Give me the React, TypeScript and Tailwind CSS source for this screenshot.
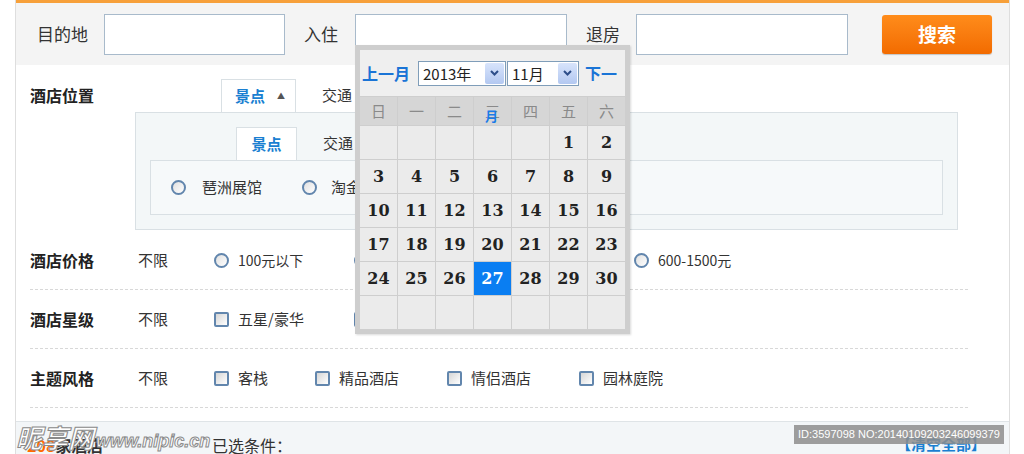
import React from 'react';

const Radio = () => (
  <span className="inline-block w-[15px] h-[15px] rounded-full border-2 border-[#6286ad] bg-linear-to-br from-[#e0e0e0] to-white shrink-0" />
);

const Check = () => (
  <span className="inline-block w-[15px] h-[15px] rounded-[2px] border-2 border-[#6286ad] bg-linear-to-br from-[#d6d6d6] to-white shrink-0" />
);

const weekDays = ['日', '一', '二', '三', '四', '五', '六'];
const dates: (number | null)[] = [
  null, null, null, null, null, 1, 2,
  3, 4, 5, 6, 7, 8, 9,
  10, 11, 12, 13, 14, 15, 16,
  17, 18, 19, 20, 21, 22, 23,
  24, 25, 26, 27, 28, 29, 30,
  null, null, null, null, null, null, null,
];

const SelectBox = ({ text, wide }: { text: string; wide?: boolean }) => (
  <div className={wide ? 'flex items-center h-[25px] w-[88px] border border-[#7f9db9] bg-white' : 'flex items-center h-[25px] w-[72px] border border-[#7f9db9] bg-white'}>
    <span className="flex-1 pl-[4px] text-[15px] text-[#222] leading-none">{text}</span>
    <span className="flex items-center justify-center w-[19px] h-[21px] mr-px bg-linear-to-b from-[#d8e4fb] to-[#b3c8f1] rounded-[2px]">
      <svg width="9" height="6" viewBox="0 0 9 6">
        <path d="M1 1 L4.5 4.5 L8 1" stroke="#2d4e8a" strokeWidth="2" fill="none" />
      </svg>
    </span>
  </div>
);

const Calendar = () => (
  <div className="absolute left-[339px] top-[45px] z-10 w-[275px] bg-[#cecece] p-[5px] shadow-[1px_1px_2px_rgba(0,0,0,0.15)]">
    {/* header */}
    <div className="flex items-center h-[46px] bg-[#efefef] overflow-hidden whitespace-nowrap">
      <span className="pl-[2px] text-[16px] font-bold text-[#1a74d6] leading-none">上一月</span>
      <span className="ml-[8px]"><SelectBox text="2013年" wide /></span>
      <span className="ml-[1px]"><SelectBox text="11月" /></span>
      <span className="ml-[6px] w-[32px] overflow-hidden text-[16px] font-bold text-[#1a74d6] leading-none">下一月</span>
    </div>
    {/* week days */}
    <div className="relative grid grid-cols-7 gap-px mt-px">
      {weekDays.map((d) => (
        <div key={d} className="h-[28px] bg-[#d6d6d6] flex items-center justify-center text-[15px] text-[#8a8a8a]">
          {d}
        </div>
      ))}
      <span className="absolute left-[125px] top-[12px] text-[13px] font-bold text-[#1a7ce8] leading-none">月</span>
    </div>
    {/* dates */}
    <div className="grid grid-cols-7 gap-px mt-px">
      {dates.map((n, i) => (
        <div
          key={i}
          className={
            n === 27
              ? 'h-[33px] bg-[#0a7ef2] flex items-center justify-center font-["DejaVu_Serif",serif] font-bold text-[16px] text-white'
              : 'h-[33px] bg-[#ebebeb] flex items-center justify-center font-["DejaVu_Serif",serif] font-bold text-[16px] text-[#222]'
          }
        >
          {n ?? ''}
        </div>
      ))}
    </div>
  </div>
);

export default function App() {
  return (
    <div className="w-[1024px] h-[454px] overflow-hidden bg-white font-['Noto_Sans_CJK_SC','Noto_Sans',sans-serif] text-[#333]">
      <div className="relative ml-[15px] w-[995px] border-x border-[#dedede]">
        <div className="h-[3px] bg-[#f7a03a]" />

        {/* search bar */}
        <div className="flex items-center h-[62px] bg-[#f4f4f4] pl-[21px]">
          <span className="w-[67px] text-[17px] text-[#333]">目的地</span>
          <div className="w-[181px] h-[41px] border border-[#a8bacb] bg-white" />
          <span className="ml-[19px] w-[51px] text-[17px] text-[#333]">入住</span>
          <div className="w-[212px] h-[41px] border border-[#a8bacb] bg-white" />
          <span className="ml-[19px] w-[50px] text-[17px] text-[#333]">退房</span>
          <div className="w-[212px] h-[41px] border border-[#a8bacb] bg-white" />
          <button className="ml-[34px] w-[110px] h-[39px] rounded-[3px] bg-linear-to-b from-[#ff8c1a] to-[#f26b00] text-white text-[19px] font-bold shadow-[0_1px_1px_rgba(0,0,0,0.2)]">
            搜索
          </button>
        </div>

        {/* filters */}
        <div className="pl-[14px] pt-[14px] w-[952px]">
          {/* 酒店位置 */}
          <div className="flex">
            <div className="w-[105px] h-[33px] leading-[33px] text-[16px] font-bold text-[#222]">酒店位置</div>
            <div className="w-[823px]">
              <div className="flex items-center h-[33px] pl-[86px]">
                <div className="flex items-center h-[33px] w-[75px] pl-[13px] bg-white border border-b-0 border-[#d9e0e4]">
                  <span className="text-[15px] font-bold text-[#1a7fd1]">景点</span>
                  <span className="ml-[12px] text-[8px] text-[#555]">▲</span>
                </div>
                <span className="ml-[26px] text-[15px] text-[#333]">交通</span>
              </div>
              <div className="h-[118px] border border-[#d9e0e4] bg-[#f3f7f8] px-[14px] pt-[14px]">
                <div className="flex items-center h-[33px] pl-[86px]">
                  <div className="flex items-center justify-center h-[33px] w-[61px] bg-white border border-b-0 border-[#d9e0e4]">
                    <span className="text-[15px] font-bold text-[#1a7fd1]">景点</span>
                  </div>
                  <span className="ml-[26px] text-[15px] text-[#333]">交通</span>
                </div>
                <div className="flex items-center h-[55px] border border-[#d9e0e4] bg-[#f6f9fa] pl-[20px]">
                  <Radio />
                  <span className="ml-[16px] text-[15px]">琶洲展馆</span>
                  <span className="ml-[40px]"><Radio /></span>
                  <span className="ml-[14px] text-[15px]">淘金路</span>
                </div>
              </div>
            </div>
          </div>

          {/* 酒店价格 */}
          <div className="flex items-center h-[59px] mt-px border-b border-dashed border-[#d8d8d8]">
            <span className="w-[108px] text-[16px] font-bold text-[#222]">酒店价格</span>
            <span className="w-[76px] text-[15px]">不限</span>
            {['100元以下', '100-300元', '300-600元', '600-1500元'].map((t) => (
              <span key={t} className="flex items-center w-[140px]">
                <Radio />
                <span className="ml-[9px] text-[14px]">{t}</span>
              </span>
            ))}
          </div>

          {/* 酒店星级 */}
          <div className="flex items-center h-[59px] border-b border-dashed border-[#d8d8d8]">
            <span className="w-[108px] text-[16px] font-bold text-[#222]">酒店星级</span>
            <span className="w-[76px] text-[15px]">不限</span>
            {['五星/豪华', '四星/高档', '三星/舒适'].map((t) => (
              <span key={t} className="flex items-center w-[140px]">
                <Check />
                <span className="ml-[9px] text-[15px]">{t}</span>
              </span>
            ))}
          </div>

          {/* 主题风格 */}
          <div className="flex items-center h-[59px] border-b border-dashed border-[#d8d8d8]">
            <span className="w-[108px] text-[16px] font-bold text-[#222]">主题风格</span>
            <span className="w-[76px] text-[15px]">不限</span>
            <span className="flex items-center w-[101px]">
              <Check />
              <span className="ml-[9px] text-[15px]">客栈</span>
            </span>
            <span className="flex items-center w-[132px]">
              <Check />
              <span className="ml-[9px] text-[15px]">精品酒店</span>
            </span>
            <span className="flex items-center w-[132px]">
              <Check />
              <span className="ml-[9px] text-[15px]">情侣酒店</span>
            </span>
            <span className="flex items-center">
              <Check />
              <span className="ml-[9px] text-[15px]">园林庭院</span>
            </span>
          </div>
        </div>

        {/* result bar */}
        <div className="relative mt-[13px] h-[40px] border-t border-[#dfe4e7] bg-[#f3f6f8] flex items-center pl-[11px] pt-[6px]">
          <span className="w-[185px] text-[16px] font-bold text-[#333]">
            <span className="text-[#ff6a00]">208</span>家酒店
          </span>
          <span className="text-[16px] text-[#333]">已选条件：</span>
          <span className="ml-auto mr-[23px] text-[15px] font-bold text-[#1a7fd1]">【清空全部】</span>

          <span className="absolute left-0 top-[2px] flex items-end italic text-white [-webkit-text-stroke:1px_#8a8a8a] leading-none whitespace-nowrap">
            <span className="text-[26px] font-bold">昵享网</span>
            <span className="text-[18px] font-bold ml-[2px] font-['Liberation_Sans',sans-serif]">www.nipic.cn</span>
          </span>
          <span className="absolute right-[5px] top-[3px] h-[19px] w-[210px] overflow-hidden bg-[#8d8d8d]/85 text-white text-[11px] leading-[19px] text-center whitespace-nowrap font-['Liberation_Sans',sans-serif]">
            ID:3597098 NO:20140109203246099379
          </span>
        </div>

        <Calendar />
      </div>
    </div>
  );
}
